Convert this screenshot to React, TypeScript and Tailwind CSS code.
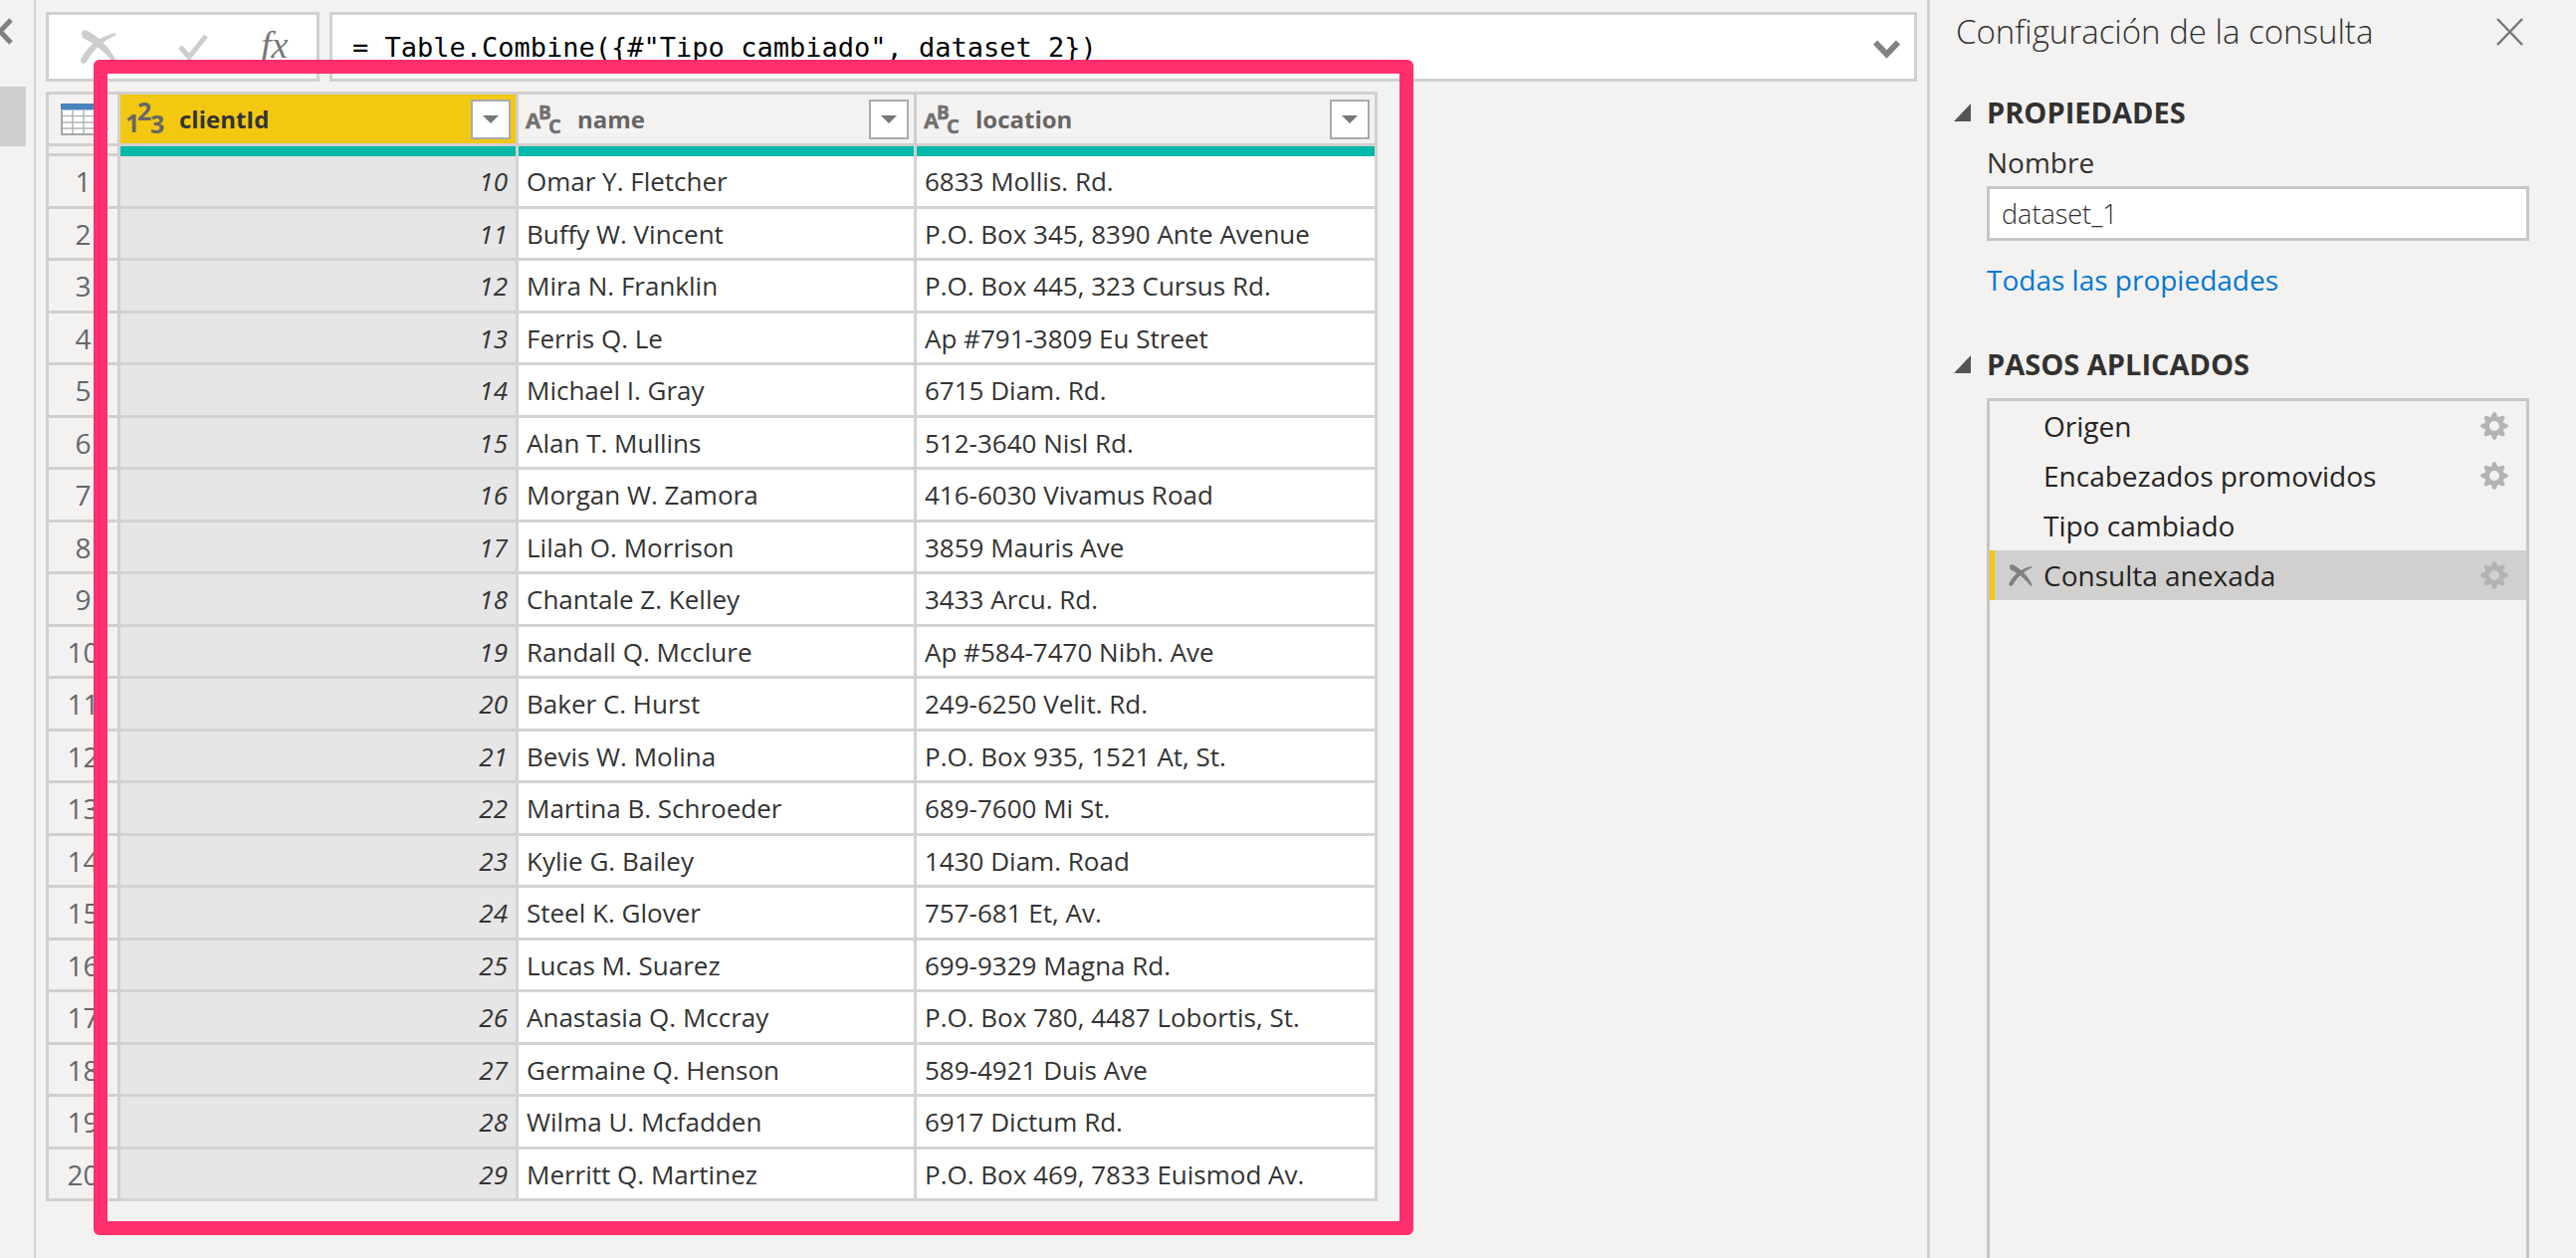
import React from "react";

type Client = { id: number; name: string; location: string };

const CLIENTS: Client[] = [
  { id: 10, name: "Omar Y. Fletcher", location: "6833 Mollis. Rd." },
  { id: 11, name: "Buffy W. Vincent", location: "P.O. Box 345, 8390 Ante Avenue" },
  { id: 12, name: "Mira N. Franklin", location: "P.O. Box 445, 323 Cursus Rd." },
  { id: 13, name: "Ferris Q. Le", location: "Ap #791-3809 Eu Street" },
  { id: 14, name: "Michael I. Gray", location: "6715 Diam. Rd." },
  { id: 15, name: "Alan T. Mullins", location: "512-3640 Nisl Rd." },
  { id: 16, name: "Morgan W. Zamora", location: "416-6030 Vivamus Road" },
  { id: 17, name: "Lilah O. Morrison", location: "3859 Mauris Ave" },
  { id: 18, name: "Chantale Z. Kelley", location: "3433 Arcu. Rd." },
  { id: 19, name: "Randall Q. Mcclure", location: "Ap #584-7470 Nibh. Ave" },
  { id: 20, name: "Baker C. Hurst", location: "249-6250 Velit. Rd." },
  { id: 21, name: "Bevis W. Molina", location: "P.O. Box 935, 1521 At, St." },
  { id: 22, name: "Martina B. Schroeder", location: "689-7600 Mi St." },
  { id: 23, name: "Kylie G. Bailey", location: "1430 Diam. Road" },
  { id: 24, name: "Steel K. Glover", location: "757-681 Et, Av." },
  { id: 25, name: "Lucas M. Suarez", location: "699-9329 Magna Rd." },
  { id: 26, name: "Anastasia Q. Mccray", location: "P.O. Box 780, 4487 Lobortis, St." },
  { id: 27, name: "Germaine Q. Henson", location: "589-4921 Duis Ave" },
  { id: 28, name: "Wilma U. Mcfadden", location: "6917 Dictum Rd." },
  { id: 29, name: "Merritt Q. Martinez", location: "P.O. Box 469, 7833 Euismod Av." },
];

const STEPS = [
  { label: "Origen", settings: true, selected: false },
  { label: "Encabezados promovidos", settings: true, selected: false },
  { label: "Tipo cambiado", settings: false, selected: false },
  { label: "Consulta anexada", settings: true, selected: true },
];

function BrushX({ className }: { className: string }) {
  return (
    <svg viewBox="0 0 36 34" className={className} fill="currentColor" aria-hidden="true">
      <path d="M1 5C0 1 4 -1 7 1C17 6 30 18 36 32L34 34C25 23 15 14 2 8Z" />
      <path d="M0 30C-1 34 4 35 6 32C12 21 22 11 36 5L35 3C20 6 7 15 0 30Z" />
    </svg>
  );
}

function GearIcon() {
  return (
    <svg viewBox="0 0 28 28" className="size-7 text-[#b3b3b3]" aria-hidden="true">
      <circle cx="14" cy="14" r="7.5" fill="none" stroke="currentColor" strokeWidth="5" />
      {[0, 45, 90, 135, 180, 225, 270, 315].map((a) => (
        <path
          key={a}
          transform={`rotate(${a} 14 14)`}
          fill="currentColor"
          d="M10.5 6L12 1.5Q14 -1.4 16 1.5L17.5 6Z"
        />
      ))}
    </svg>
  );
}

function NumberTypeIcon() {
  return (
    <svg viewBox="0 0 38 48" className="h-12 w-[38px] overflow-visible" fill="#666666" fontFamily="Open Sans, sans-serif" fontSize="25" aria-hidden="true">
      <text x="-2" y="37">1</text>
      <text x="10" y="25">2</text>
      <text x="23" y="38">3</text>
    </svg>
  );
}

function TextTypeIcon() {
  return (
    <svg viewBox="0 0 38 48" className="h-12 w-[38px] overflow-visible" fill="#707070" stroke="#707070" strokeWidth="0.5" fontFamily="Open Sans, sans-serif" aria-hidden="true">
      <text x="0" y="33" fontSize="22">A</text>
      <text x="13" y="24" fontSize="19">B</text>
      <text x="23" y="38" fontSize="20">C</text>
    </svg>
  );
}

function TableIcon() {
  return (
    <svg viewBox="0 0 50 32" className="h-8 w-[50px]" aria-hidden="true">
      <rect x="1" y="1" width="34" height="30" fill="#fff" />
      <path d="M12 7V31M23 7V31M34 7V31M1 12.500H35M1 19H35M1 25H35" stroke="#b5b5b5" strokeWidth="1.500" fill="none" />
      <path d="M1 7V31H35" stroke="#8f8f8f" strokeWidth="1.500" fill="none" />
      <rect x="0" y="0" width="35" height="6.500" fill="#4a82bd" />
      <path d="M38 25H48L43 30Z" fill="#6b6b6b" />
    </svg>
  );
}

function ColumnHeader({ title, icon, selected }: { title: string; icon: React.ReactNode; selected?: boolean }) {
  return (
    <th
      scope="col"
      className={
        "border-r-3 border-b-3 border-[#d2d0ce] p-0 " +
        (selected ? "bg-[#f2c811] text-[#333333]" : "bg-[#f3f2f1] text-[#666666]")
      }
    >
      <div className="flex h-[49px] items-center pr-[5px] pl-[7px]">
        {icon}
        <span className="ml-[14px] flex-1 text-left text-[24px] leading-8 font-bold">{title}</span>
        <button
          type="button"
          aria-label={`Filtrar ${title}`}
          className="flex size-10 items-center justify-center border-2 border-[#ababab] bg-white"
        >
          <svg viewBox="0 0 16 8" className="h-2 w-4" aria-hidden="true">
            <path d="M0 0H16L8 8Z" fill="#777777" />
          </svg>
        </button>
      </div>
    </th>
  );
}

function DataGrid() {
  return (
    <table className="w-[1338px] table-fixed border-separate border-spacing-0 border-t-3 border-l-3 border-[#d2d0ce]">
      <colgroup>
        <col className="w-[72px]" />
        <col className="w-[400px]" />
        <col className="w-[400px]" />
        <col />
      </colgroup>
      <thead>
        <tr className="h-[52px]">
          <th className="border-r-3 border-b-3 border-[#d2d0ce] p-0">
            <button type="button" aria-label="Opciones de tabla" className="ml-3 flex items-center">
              <TableIcon />
            </button>
          </th>
          <ColumnHeader title="clientId" icon={<NumberTypeIcon />} selected />
          <ColumnHeader title="name" icon={<TextTypeIcon />} />
          <ColumnHeader title="location" icon={<TextTypeIcon />} />
        </tr>
        <tr className="h-[10px]">
          <td className="border-r-3 border-b-3 border-[#d2d0ce] p-0" />
          <td className="border-r-3 border-[#d3d3d3] bg-[#01b8aa] bg-clip-padding p-0" />
          <td className="border-r-3 border-[#d3d3d3] bg-[#01b8aa] bg-clip-padding p-0" />
          <td className="border-r-3 border-[#d3d3d3] bg-[#01b8aa] bg-clip-padding p-0" />
        </tr>
      </thead>
      <tbody className="text-[26px] leading-10 text-[#333333]">
        {CLIENTS.map((c, i) => (
          <tr key={c.id} className="h-[53px] even:h-[52px]">
            <th scope="row" className="border-r-3 border-b-3 border-[#d2d0ce] p-0 text-center text-[28px] font-normal text-[#666666]">
              {i + 1}
            </th>
            <td className="border-r-3 border-b-3 border-[#d3d3d3] bg-[#e6e6e6] p-0 pr-2 text-right italic">{c.id}</td>
            <td className="border-r-3 border-b-3 border-[#d3d3d3] bg-white p-0 pl-2">{c.name}</td>
            <td className="border-r-3 border-b-3 border-[#d3d3d3] bg-white p-0 pl-2">{c.location}</td>
          </tr>
        ))}
      </tbody>
    </table>
  );
}

function SectionHeading({ children }: { children: React.ReactNode }) {
  return (
    <h2>
      <button type="button" aria-expanded="true" className="flex h-10 items-center gap-4 pl-6 text-[29px] leading-10 font-bold">
        <svg viewBox="0 0 17 18" className="h-[18px] w-[17px]" aria-hidden="true">
          <path d="M17 0V18H0Z" fill="#555555" />
        </svg>
        {children}
      </button>
    </h2>
  );
}

export default function App() {
  return (
    <div className="flex min-h-screen bg-[#f3f2f1] font-['Open_Sans','Noto_Sans',sans-serif] text-[#323130]">
      <nav className="w-9 shrink-0 border-r-2 border-[#d2d0ce]" aria-label="Consultas">
        <button type="button" aria-label="Expandir consultas" className="mt-[18px] block">
          <svg viewBox="0 0 13 27" className="h-[27px] w-[13px]" aria-hidden="true">
            <path d="M11 2L0 13.500L11 25" fill="none" stroke="#7f7f7f" strokeWidth="5" />
          </svg>
        </button>
        <div className="mt-[42px] h-[60px] w-[26px] bg-[#d0cfcd]" />
      </nav>

      <main className="min-w-0 flex-1 px-[10px] pt-3">
        <div className="flex h-[70px] gap-[10px]">
          <div className="flex w-[275px] shrink-0 items-center border-3 border-[#d2d0ce] bg-white pl-8">
            <button type="button" aria-label="Cancelar">
              <BrushX className="h-[34px] w-9 text-[#cdcdcd]" />
            </button>
            <button type="button" aria-label="Confirmar" className="ml-[62px]">
              <svg viewBox="0 0 30 27" className="h-[27px] w-[30px]" aria-hidden="true">
                <path d="M2 13L11 23.500L28 2" fill="none" stroke="#cdcdcd" strokeWidth="5" />
              </svg>
            </button>
            <button
              type="button"
              aria-label="Insertar paso"
              className="ml-[53px] pb-1 font-['Liberation_Serif',serif] text-[38px] leading-[44px] text-[#777777] italic"
            >
              fx
            </button>
          </div>
          <div className="flex min-w-0 flex-1 items-center border-3 border-[#d2d0ce] bg-white pr-[14px]">
            <input
              type="text"
              aria-label="Barra de fórmulas"
              defaultValue={'= Table.Combine({#"Tipo cambiado", dataset_2})'}
              className="h-full min-w-0 flex-1 bg-transparent pl-5 font-['DejaVu_Sans_Mono',monospace] text-[27px] text-black outline-none"
            />
            <button type="button" aria-label="Expandir fórmula">
              <svg viewBox="0 0 27 19" className="mt-1 h-[19px] w-[27px]" aria-hidden="true">
                <path d="M2 2.500L13.500 14.500L25 2.500" fill="none" stroke="#828282" strokeWidth="6" />
              </svg>
            </button>
          </div>
        </div>

        <div className="relative mt-[10px] w-fit">
          <DataGrid />
          <div className="pointer-events-none absolute -top-8 -right-9 -bottom-[34px] left-12 rounded-md border-14 border-[#ff2f6d]" />
        </div>
      </main>

      <aside className="flex w-[652px] shrink-0 flex-col border-l-3 border-[#d2d0ce]">
        <header className="flex h-16 items-center justify-between pr-[53px] pl-[26px]">
          <h1 className="text-[33px] leading-[44px] font-light">Configuración de la consulta</h1>
          <button type="button" aria-label="Cerrar">
            <svg viewBox="0 0 27 28" className="h-7 w-[27px]" aria-hidden="true">
              <path d="M1 1L26 27M26 1L1 27" stroke="#777777" strokeWidth="2.500" fill="none" />
            </svg>
          </button>
        </header>

        <section className="mt-[29px]">
          <SectionHeading>PROPIEDADES</SectionHeading>
          <div className="mt-3 flex flex-col items-start pr-[47px] pl-[57px]">
            <label htmlFor="query-name" className="text-[28px] leading-9">
              Nombre
            </label>
            <input
              id="query-name"
              type="text"
              defaultValue="dataset_1"
              className="mt-[6px] h-[55px] w-full border-3 border-[#c8c6c4] bg-white pl-3 text-[27px] font-light outline-none"
            />
            <a href="#propiedades" className="mt-[19px] text-[28px] leading-10 text-[#0078d4]">
              Todas las propiedades
            </a>
          </div>
        </section>

        <section className="mt-[45px] flex flex-1 flex-col">
          <SectionHeading>PASOS APLICADOS</SectionHeading>
          <ul className="mt-[14px] mr-[47px] ml-[57px] flex-1 border-x-3 border-t-3 border-[#c8c6c4] text-[28px] leading-10 text-[#252423]">
            {STEPS.map((s) => (
              <li
                key={s.label}
                className={
                  "flex h-[50px] items-center border-l-5 pr-[18px] " +
                  (s.selected ? "border-[#f2c811] bg-[#d2d0ce]" : "border-transparent")
                }
              >
                <span className="flex w-[49px] items-center pl-[14px]">
                  {s.selected && (
                    <button type="button" aria-label={`Eliminar ${s.label}`}>
                      <BrushX className="h-[22px] w-6 text-[#808080]" />
                    </button>
                  )}
                </span>
                <span className="flex-1">{s.label}</span>
                {s.settings && (
                  <button type="button" aria-label={`Configurar ${s.label}`}>
                    <GearIcon />
                  </button>
                )}
              </li>
            ))}
          </ul>
        </section>
      </aside>
    </div>
  );
}
